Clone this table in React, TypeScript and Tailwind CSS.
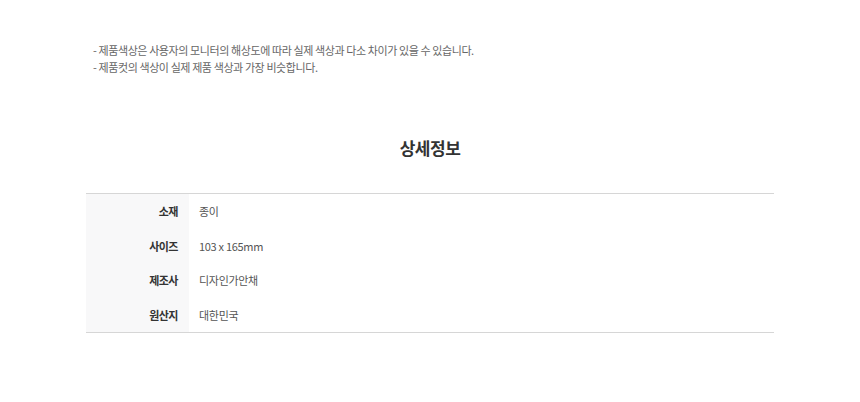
export default function App() {
  const rows = [
    ["소재", "종이"],
    ["사이즈", "103 x 165mm"],
    ["제조사", "디자인가안채"],
    ["원산지", "대한민국"],
  ];
  return (
    <div
      className="w-[860px] h-[402px] bg-white"
      style={{ fontFamily: '"Noto Sans CJK KR", "Noto Sans", sans-serif' }}
    >
      <div className="pt-[42px] pl-[93px] text-[11px] leading-[17px] text-[#666] tracking-[-0.4px]">
        <p>- 제품색상은 사용자의 모니터의 해상도에 따라 실제 색상과 다소 차이가 있을 수 있습니다.</p>
        <p>- 제품컷의 색상이 실제 제품 색상과 가장 비슷합니다.</p>
      </div>
      <h2 className="mt-[60px] text-center text-[17px] leading-[24px] font-bold text-[#333] tracking-[-0.5px]">
        상세정보
      </h2>
      <div className="mt-[33px] ml-[86px] w-[688px] border-t border-b border-[#d6d6d6]">
        {rows.map(([k, v]) => (
          <div key={k} className="flex h-[34.5px] items-center">
            <div className="w-[103px] h-full bg-[#f8f8f9] flex items-center justify-end pr-[11px] text-[11px] font-bold text-[#333] tracking-[-0.5px]">
              {k}
            </div>
            <div className="pl-[10px] text-[11px] text-[#555] tracking-[-0.3px]">{v}</div>
          </div>
        ))}
      </div>
    </div>
  );
}
